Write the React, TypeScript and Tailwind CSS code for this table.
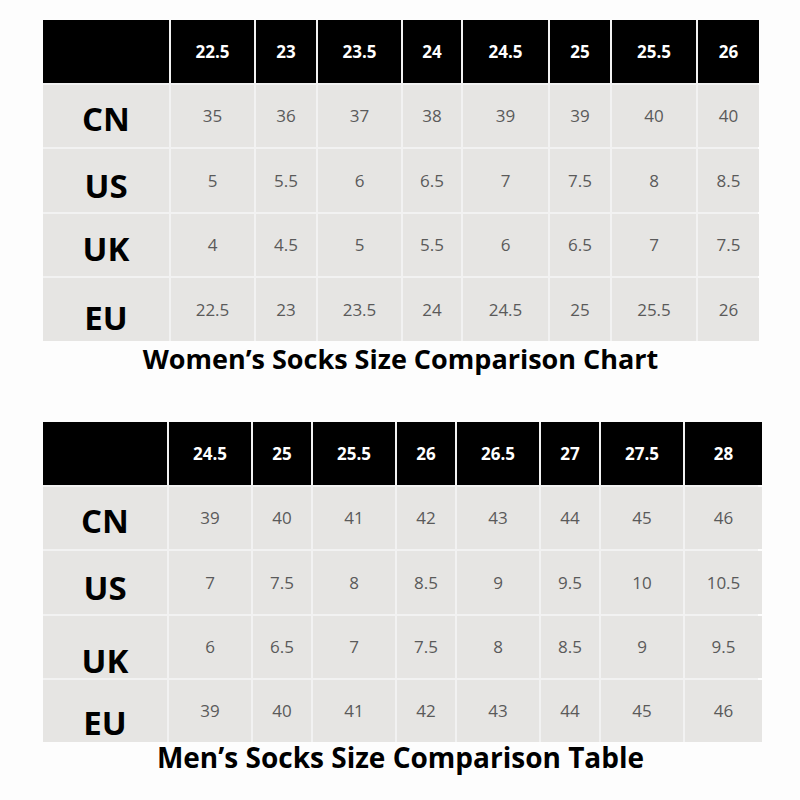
const WOMEN = {
  cols: "grid-cols-[126px_83px_60px_83px_58px_85px_60px_84px_61px]",
  rows: "grid-rows-[63px_62px_63px_62px_63px]",
  // nudges for the big row labels, which sit a bit low in the source chart
  labelPad: ["pt-[4px]", "pt-[10px]", "pt-[6px]", "pt-[16px]"],
  head: ["22.5", "23", "23.5", "24", "24.5", "25", "25.5", "26"],
  data: [
    ["CN", "35", "36", "37", "38", "39", "39", "40", "40"],
    ["US", "5", "5.5", "6", "6.5", "7", "7.5", "8", "8.5"],
    ["UK", "4", "4.5", "5", "5.5", "6", "6.5", "7", "7.5"],
    ["EU", "22.5", "23", "23.5", "24", "24.5", "25", "25.5", "26"],
  ],
}

const MEN = {
  cols: "grid-cols-[124px_82px_58px_82px_58px_82px_58px_82px_77px]",
  rows: "grid-rows-[63px_62px_63px_62px_62px]",
  labelPad: ["pt-[4px]", "pt-[10px]", "pt-[26px]", "pt-[22px]"],
  head: ["24.5", "25", "25.5", "26", "26.5", "27", "27.5", "28"],
  data: [
    ["CN", "39", "40", "41", "42", "43", "44", "45", "46"],
    ["US", "7", "7.5", "8", "8.5", "9", "9.5", "10", "10.5"],
    ["UK", "6", "6.5", "7", "7.5", "8", "8.5", "9", "9.5"],
    ["EU", "39", "40", "41", "42", "43", "44", "45", "46"],
  ],
}

type Table = typeof WOMEN

function SizeTable({ t }: { t: Table }) {
  return (
    <div className={`grid w-[715px] gap-[2px] bg-[#f2f2f2] ${t.cols} ${t.rows}`}>
      {/* header row: blank corner + sizes */}
      <div className="bg-black" />
      {t.head.map((h, i) => (
        <div
          key={"h" + i}
          className="flex items-center justify-center bg-black text-[17px] font-bold text-white"
        >
          {h}
        </div>
      ))}
      {t.data.map((row, r) =>
        row.map((cell, j) =>
          j === 0 ? (
            <div
              key={row[0] + j}
              className={`flex items-center justify-center bg-[#e6e5e3] text-[33px] font-bold leading-none text-black ${t.labelPad[r]}`}
            >
              {cell}
            </div>
          ) : (
            <div
              key={row[0] + j}
              className="flex items-center justify-center bg-[#e6e5e3] text-[17px] text-[#5a5a5a]"
            >
              {cell}
            </div>
          )
        )
      )}
    </div>
  )
}

export default function App() {
  return (
    <div
      className="flex h-[800px] w-[800px] flex-col bg-[#fdfdfd] pl-[43px] pt-[20px]"
      style={{ fontFamily: '"Open Sans", "Noto Sans", sans-serif' }}
    >
      <SizeTable t={WOMEN} />
      <div className="flex h-[36px] w-[715px] items-center justify-center text-[27px] font-bold text-black">
        Women’s Socks Size Comparison Chart
      </div>

      <div className="mt-[45px]">
        <SizeTable t={MEN} />
      </div>
      <div className="flex h-[30px] w-[715px] items-center justify-center text-[28px] font-bold text-black">
        Men’s Socks Size Comparison Table
      </div>
    </div>
  )
}
